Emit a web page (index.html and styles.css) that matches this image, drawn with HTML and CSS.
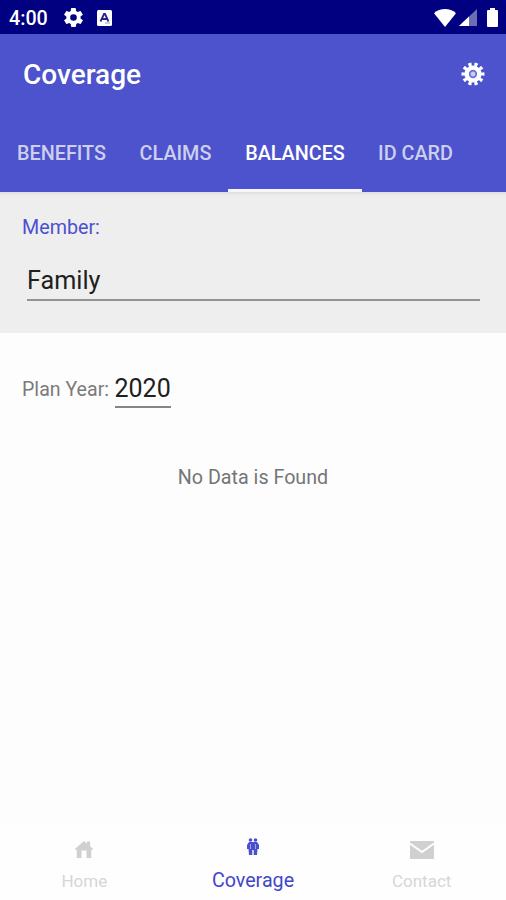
FILE: index.html
```html
<!DOCTYPE html>
<html lang="en">
<head>
<meta charset="utf-8">
<title>Coverage</title>
<link rel="stylesheet" href="styles.css">
</head>
<body>
<div class="status">
  <span class="time">4:00</span>
  <svg class="gear" viewBox="2 2 20 20" width="19" height="19"><path fill="#fff" fill-rule="evenodd" d="M19.4 13a7.800 7.800 0 0 0 0-2l2.100-1.600a.5.5 0 0 0 .1-.7l-2-3.400a.5.5 0 0 0-.6-.2l-2.500 1a7.300 7.300 0 0 0-1.700-1L14.400 2.400a.5.5 0 0 0-.5-.4h-4a.5.5 0 0 0-.5.4L9.100 5.100a7.300 7.300 0 0 0-1.700 1l-2.500-1a.5.5 0 0 0-.6.2l-2 3.400a.5.5 0 0 0 .1.700L4.500 11a7.800 7.800 0 0 0 0 2l-2.100 1.600a.5.5 0 0 0-.1.700l2 3.400c.1.200.4.300.6.200l2.500-1a7.300 7.300 0 0 0 1.700 1l.4 2.700c0 .2.200.4.500.4h4c.300 0 .5-.2.500-.4l.4-2.700a7.300 7.300 0 0 0 1.700-1l2.500 1c.2.100.5 0 .6-.2l2-3.400a.5.5 0 0 0-.1-.7zM12 15.500a3.500 3.500 0 1 1 0-7 3.500 3.500 0 0 1 0 7z"/></svg>
  <svg class="app" viewBox="0 0 15 16" width="15" height="16"><rect width="15" height="16" rx="1.500" fill="#fff"/><path d="M3.500 11.500 7 4h1l3.500 7.500M5 9h5" fill="none" stroke="#26268c" stroke-width="1.800"/><path d="M8 13h5" stroke="#9a9ac8"/></svg>
  <span class="spacer"></span>
  <svg class="wifi" viewBox="0 0 22 18" width="22" height="18"><path fill="#fff" d="M11 18 0 4.200C6-1.400 16-1.400 22 4.200z"/></svg>
  <svg class="signal" viewBox="0 0 18 17" width="18" height="17"><path fill="#6d6db5" d="M0 17 18 0v17z"/><path fill="#fff" d="M0 17 10 7.500V17z"/></svg>
  <svg class="battery" viewBox="0 0 11 19" width="11" height="19"><path fill="#fff" d="M3 0h5v2h2q1 0 1 1v15q0 1-1 1H1q-1 0-1-1V3q0-1 1-1h2z"/></svg>
</div>
<header class="header">
  <div class="bar">
    <h1 class="title"><span>Coverage</span></h1>
    <svg class="settings" viewBox="-12 -12 24 24" width="24" height="24">
      <circle r="8.600" fill="#fff"/>
      <circle r="9.600" fill="none" stroke="#fff" stroke-width="3.800" pathLength="100" stroke-dasharray="5.200 4.800" stroke-dashoffset="2.600"/>
      <circle r="3.300" fill="#c9cbf1" stroke="#6a6fd5" stroke-width="1.700"/>
    </svg>
  </div>
  <nav class="tabs">
    <span class="tab benefits">BENEFITS</span>
    <span class="tab claims">CLAIMS</span>
    <span class="tab balances active">BALANCES</span>
    <span class="tab idcard">ID CARD</span>
  </nav>
</header>
<section class="member">
  <div class="member-label"><span>Member:</span></div>
  <div class="member-value"><span>Family</span></div>
</section>
<main class="content">
  <div class="plan"><span class="plan-label">Plan Year:</span><span class="plan-value">2020</span></div>
  <p class="empty"><span>No Data is Found</span></p>
</main>
<footer class="bottom">
  <div class="item">
    <svg viewBox="0 0 18 17" width="18" height="17"><path fill="#d0d0d0" d="M9 0 12 2.500V.5h3.200v4.700L18 8l-1 1.200h-.8V17H11.500V9.500H6.500V17H1.800V9.200H1L0 8z"/></svg>
    <span class="home">Home</span>
  </div>
  <div class="item selected">
    <svg viewBox="0 0 12 18" width="12" height="18"><g fill="#4a4fce"><circle cx="3.500" cy="2" r="1.800"/><circle cx="8.500" cy="2" r="1.800"/><path d="M2 4h8l2 3v4h-1.500L10 17H6.700v-5H5.300v5H2l-.5-6H0V7z"/></g><path d="M3.500 6v5M8.500 6v5" stroke="#b9bbec" stroke-width=".8"/></svg>
    <span class="cover">Coverage</span>
  </div>
  <div class="item">
    <svg viewBox="0 0 24 18" width="24" height="18"><rect width="24" height="18" rx="1" fill="#d0d0d0"/><path d="M0 2.500 12 11 24 2.500" fill="none" stroke="#fdfdfd" stroke-width="2"/></svg>
    <span class="contact">Contact</span>
  </div>
</footer>
</body>
</html>
```

FILE: styles.css
```css
* { box-sizing: border-box; }
body {
  margin: 0;
  height: 900px;
  display: flex;
  flex-direction: column;
  overflow: hidden;
  background: #fdfdfd;
  font-family: Roboto, sans-serif;
}
svg { display: block; flex: none; }
.status {
  height: 34px;
  flex: none;
  display: flex;
  align-items: center;
  padding: 1px 8px 0 9px;
  background: #000080;
}
.time { width: 55px; color: #fff; font-size: 19.7px; font-weight: 500; line-height: 34px; padding-top: 2px; }
.app { margin-left: 14px; }
.spacer { flex: 1; }
.signal { margin: 0 10px 0 3px; }
.header { height: 158px; flex: none; background: #4c53cc; }
.bar {
  height: 80px;
  display: flex;
  align-items: center;
  justify-content: space-between;
  padding: 0 21px 0 23px;
}
.title { margin: 2px 0 0; color: #fff; font-size: 28px; font-weight: 500; line-height: 36px; }
.tabs { height: 78px; display: flex; }
.tab {
  display: flex;
  justify-content: center;
  height: 78px;
  border-bottom: 3px solid transparent;
  color: #cdcfec;
  font-size: 19.8px;
  font-weight: 500;
  line-height: 79px;
  white-space: nowrap;
}
.benefits { width: 123px; }
.claims { width: 105px; }
.balances { width: 134px; }
.idcard { width: 107px; }
.active { color: #fff; border-bottom-color: #f7f7fb; }
.member {
  height: 141px;
  flex: none;
  padding: 21px 26px 0 22px;
  background: linear-gradient(#dfdfe2, #eee 4px);
}
.member-label { color: #4c51cf; font-size: 19.7px; line-height: 30px; }
.member-value {
  height: 58px;
  margin-left: 5px;
  border-bottom: 2px solid #929292;
  color: #202020;
  font-size: 25.2px;
  line-height: 76px;
}
.content { flex: 1; padding-top: 36px; }
.plan { display: flex; padding-left: 22px; }
.plan-label { width: 92.5px; padding-top: 1px; color: #7b7b7b; font-size: 19.6px; line-height: 40px; white-space: nowrap; }
.plan-value {
  width: 56px;
  height: 39px;
  border-bottom: 2px solid #858585;
  color: #202020;
  font-size: 25px;
  line-height: 40px;
}
.empty { margin: 53px 0 0; color: #757575; font-size: 19.7px; line-height: 30px; text-align: center; }
.bottom { height: 78px; flex: none; display: flex; background: #fefefe; }
.item {
  flex: 1;
  display: flex;
  flex-direction: column;
  align-items: center;
  justify-content: space-between;
  padding: 19px 0 7px;
  color: #d6d6d6;
  font-size: 17px;
  line-height: 24px;
}
.selected { padding: 16px 0 7px; color: #4146cb; font-size: 19.7px; }
```
